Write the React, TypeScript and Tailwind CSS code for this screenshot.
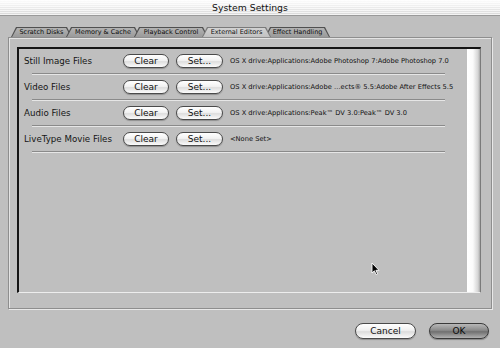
import React from 'react';

const font = { fontFamily: '"DejaVu Sans", "Liberation Sans", sans-serif' };

const tabs = [
  { label: 'Scratch Disks', w: 'w-[61px]', z: 'z-[1]' },
  { label: 'Memory & Cache', w: 'w-[74px]', z: 'z-[2]' },
  { label: 'Playback Control', w: 'w-[74px]', z: 'z-[3]' },
  { label: 'External Editors', w: 'w-[69px]', z: 'z-[10]', active: true },
  { label: 'Effect Handling', w: 'w-[65px]', z: 'z-[4]' },
];

const rows = [
  { label: 'Still Image Files', path: 'OS X drive:Applications:Adobe Photoshop 7:Adobe Photoshop 7.0' },
  { label: 'Video Files', path: 'OS X drive:Applications:Adobe …ects® 5.5:Adobe After Effects 5.5' },
  { label: 'Audio Files', path: 'OS X drive:Applications:Peak™ DV 3.0:Peak™ DV 3.0' },
  { label: 'LiveType Movie Files', path: '<None Set>' },
];

const trap = '[clip-path:polygon(5px_0,calc(100%-5px)_0,100%_100%,0_100%)]';

const Tab = ({ label, w, z, active }: { label: string; w: string; z: string; active?: boolean }) => (
  <div className={`relative ${w} ${z} -mr-[6px] h-[10px] ${trap} ${active ? 'bg-[#7a7a7a]' : 'bg-[#505050]'}`}>
    <div
      className={`absolute left-[1px] right-[1px] top-[1px] bottom-0 ${trap} ${
        active
          ? 'bg-[linear-gradient(180deg,#d2d2d2,#c2c2c2)] text-[#111]'
          : 'bg-[linear-gradient(180deg,#b2b2b2,#9a9a9a)] text-[#0c0c0c]'
      } flex items-center justify-center text-[6.5px] leading-none whitespace-nowrap`}
    >
      {label}
    </div>
  </div>
);

const PillButton = ({ children, w }: { children: React.ReactNode; w: string }) => (
  <div
    className={`${w} h-[14px] rounded-full border border-[#4a4a4a] bg-[linear-gradient(180deg,#ffffff_0%,#f2f2f2_45%,#dedede_55%,#fbfbfb_100%)] shadow-[0_1px_1px_rgba(0,0,0,0.25)] flex items-center justify-center text-[9px] text-[#111] leading-none`}
  >
    {children}
  </div>
);

export default function App() {
  return (
    <div className="relative w-[500px] h-[348px] overflow-hidden bg-[#bfbfbf] flex flex-col" style={font}>
      {/* title bar */}
      <div className="h-[16px] shrink-0 border-b border-[#9a9a9a] bg-[repeating-linear-gradient(180deg,rgba(255,255,255,0.7)_0_1px,transparent_1px_2px),linear-gradient(180deg,#fdfdfd,#d9d9d9)] flex items-center justify-center">
        <span className="text-[9.3px] text-[#111] leading-none">System Settings</span>
      </div>

      <div className="px-[8px] pt-[11px] flex flex-col">
        {/* tabs */}
        <div className="flex ml-[3px] h-[10px]">
          {tabs.map((t) => (
            <Tab key={t.label} {...t} />
          ))}
        </div>

        {/* outer group box */}
        <div className="h-[272px] border border-[#8e8e8e] shadow-[inset_1px_1px_0_#e4e4e4,1px_1px_0_#e8e8e8] pl-[8px] pr-[10px] pt-[9px]">
          <div className="h-[246px] flex border-t-2 border-l-2 border-[#141414] border-b border-r border-b-[#ededed] border-r-[#7a7a7a]">
            <div className="flex-1 pt-[5px] pl-[5px]">
              {rows.map((r) => (
                <div key={r.label} className="flex flex-col">
                  <div className="h-[14px] flex items-center">
                    <div className="w-[99px] text-[8.7px] text-[#151515] leading-none whitespace-nowrap">{r.label}</div>
                    <PillButton w="w-[46px]">Clear</PillButton>
                    <div className="w-[7px]" />
                    <PillButton w="w-[47px]">Set...</PillButton>
                    <div className="ml-[7px] text-[6.7px] text-[#111] leading-none whitespace-nowrap">{r.path}</div>
                  </div>
                  <div className="mt-[5px] mb-[5px] ml-[8px] w-[413px] h-[2px] border-t border-[#8a8a8a] border-b border-b-[#e6e6e6]" />
                </div>
              ))}
            </div>
            {/* scroll track */}
            <div className="w-[13px] bg-[linear-gradient(90deg,#ffffff_0%,#fbfbfb_45%,#d4d4d4_85%,#a8a8a8_100%)]" />
          </div>
        </div>
      </div>

      {/* bottom buttons */}
      <div className="flex justify-end gap-[13px] pr-[11px] mt-[14px]">
        <div className="w-[61px] h-[16px] rounded-full border border-[#4a4a4a] bg-[linear-gradient(180deg,#ffffff_0%,#f0f0f0_45%,#dcdcdc_55%,#fafafa_100%)] shadow-[0_1px_1px_rgba(0,0,0,0.25)] flex items-center justify-center text-[9px] text-[#111] leading-none">
          Cancel
        </div>
        <div className="w-[60px] h-[16px] rounded-full border border-[#3a3a3a] bg-[linear-gradient(180deg,#b8b8b8_0%,#8a8a8a_45%,#707070_55%,#b0b0b0_100%)] shadow-[0_1px_1px_rgba(0,0,0,0.3)] flex items-center justify-center text-[9px] text-[#0a0a0a] leading-none">
          OK
        </div>
      </div>

      {/* mouse cursor */}
      <svg className="absolute left-[371px] top-[262px]" width="9" height="14" viewBox="0 0 9 14">
        <path d="M1 1 L1 11 L3.4 8.8 L5.2 12.6 L6.6 12 L4.9 8.3 L8 8.3 Z" fill="#000" stroke="#fff" strokeWidth="0.9" strokeLinejoin="round" />
      </svg>
    </div>
  );
}
